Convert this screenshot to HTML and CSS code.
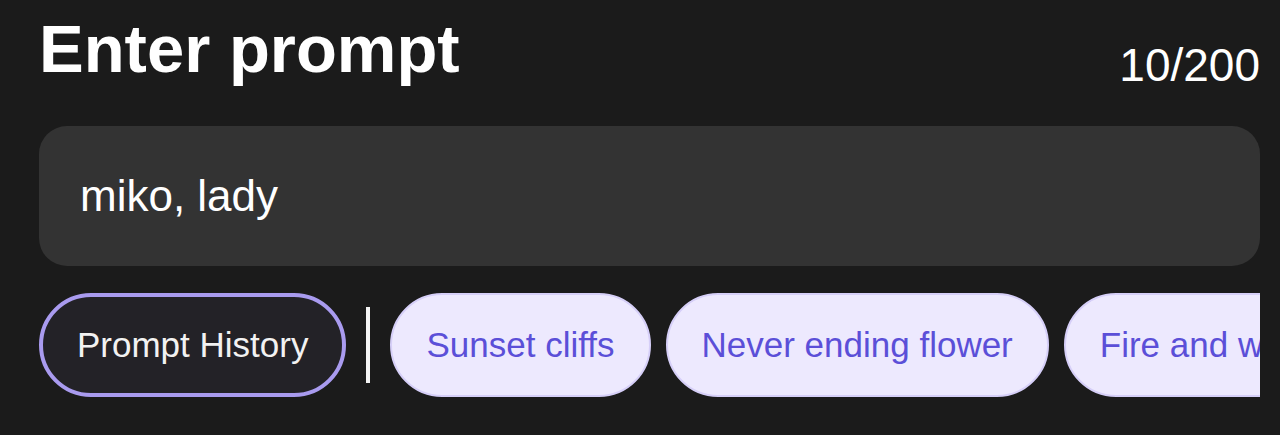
FILE: index.html
```html
<!DOCTYPE html>
<html lang="en">
<head>
  <meta charset="UTF-8">
  <title>Enter prompt</title>
  <link rel="stylesheet" href="styles.css">
</head>
<body>
  <div class="container">
    <div class="header">
      <h1>Enter prompt</h1>
      <span class="counter">10/200</span>
    </div>

    <div class="prompt-box">miko, lady</div>

    <div class="chips">
      <button class="chip history">Prompt History</button>
      <span class="divider"></span>
      <button class="chip">Sunset cliffs</button>
      <button class="chip">Never ending flower</button>
      <button class="chip">Fire and water</button>
    </div>
  </div>
</body>
</html>
```

FILE: styles.css
```css
body {
  margin: 0;
  background: #1b1b1b;
  color: #fff;
  font-family: "Liberation Sans", Arial, sans-serif;
}

.container {
  padding: 15px 20px 0 39px;
}

.header {
  display: flex;
  justify-content: space-between;
  align-items: flex-start;
}

h1 {
  margin: 0;
  font-size: 67px;
  line-height: 1;
  font-weight: bold;
}

.counter {
  margin-top: 27px;
  font-size: 46px;
  line-height: 1;
}

.prompt-box {
  margin-top: 38px;
  height: 140px;
  box-sizing: border-box;
  padding: 43px 41px;
  background: #333333;
  border-radius: 28px;
  font-size: 44px;
  line-height: 54px;
}

.chips {
  display: flex;
  align-items: center;
  gap: 15px;
  margin-top: 27px;
  overflow: hidden;
}

.chip {
  flex-shrink: 0;
  height: 104px;
  box-sizing: border-box;
  padding: 0 34px;
  border: 2px solid #d6cff8;
  border-radius: 52px;
  background: #ede9fe;
  color: #5b4fd8;
  font-family: inherit;
  font-size: 35px;
  white-space: nowrap;
  cursor: pointer;
}

.chip.history {
  border: 4px solid #a99bef;
  background: #232227;
  color: #f2f2f2;
}

.divider {
  flex-shrink: 0;
  width: 4px;
  height: 76px;
  margin: 0 5px;
  background: #f4f4f4;
}
```
